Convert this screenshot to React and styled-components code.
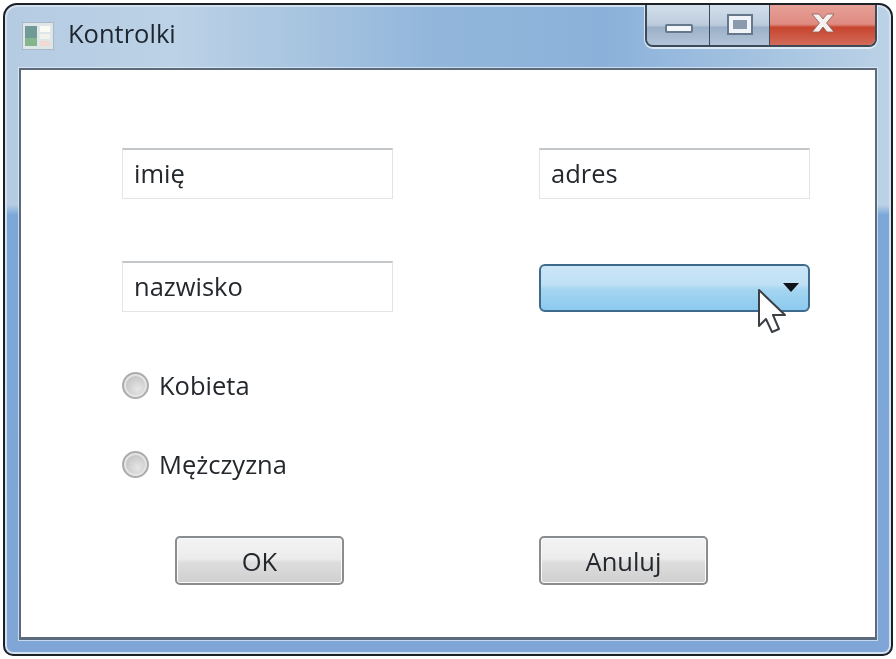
import styled, { createGlobalStyle } from "styled-components";

const GlobalStyle = createGlobalStyle`
  html, body {
    margin: 0;
    padding: 0;
    background: #fff;
  }
  body {
    font-family: "Open Sans", "Noto Sans", "Liberation Sans", sans-serif;
  }
`;

const App = () => {
  return (
    <Page>
      <GlobalStyle />
      <Window>
        <TitleBar>
          <AppIcon viewBox="0 0 32 28">
            <rect x="0.5" y="0.5" width="31" height="27" fill="#dfe6ea" stroke="#a9b8c4" />
            <rect x="3" y="4" width="12" height="20" fill="#6f9a96" />
            <rect x="3" y="16" width="12" height="8" fill="#84b58c" />
            <rect x="18" y="4" width="10" height="6" fill="#fbfbf6" />
            <rect x="18" y="12" width="10" height="5" fill="#f3f3ee" />
            <rect x="18" y="19" width="10" height="5" fill="#f2d9d2" />
          </AppIcon>
          <Title>Kontrolki</Title>
          <CaptionButtons>
            <MinimizeButton>
              <MinimizeGlyph />
            </MinimizeButton>
            <MaximizeButton>
              <MaximizeGlyph />
            </MaximizeButton>
            <CloseButton>
              <CloseGlyph viewBox="0 0 24 20">
                <path
                  d="M1 1 H8 L12 6 L16 1 H23 L15.5 10 L23 19 H16 L12 14 L8 19 H1 L8.5 10 Z"
                  fill="#f4f1f0"
                  stroke="#8a5a58"
                  strokeWidth="0.8"
                />
              </CloseGlyph>
            </CloseButton>
          </CaptionButtons>
        </TitleBar>
        <Client>
          <Form>
            <FieldRow>
              <TextField>imię</TextField>
              <TextField>adres</TextField>
            </FieldRow>
            <SecondFieldRow>
              <TextField>nazwisko</TextField>
              <ComboBox>
                <ComboArrow />
                <Cursor viewBox="0 0 30 46">
                  <path
                    d="M2 2 L2 38 L9 31 L15 44 L22 41 L16 27 L28 27 Z"
                    fill="#fff"
                    stroke="#3c3f46"
                    strokeWidth="2"
                    strokeLinejoin="round"
                  />
                </Cursor>
              </ComboBox>
            </SecondFieldRow>
            <RadioGroup>
              <RadioRow>
                <RadioDot />
                <RadioLabel>Kobieta</RadioLabel>
              </RadioRow>
              <RadioRow>
                <RadioDot />
                <RadioLabel>Mężczyzna</RadioLabel>
              </RadioRow>
            </RadioGroup>
            <ButtonRow>
              <OkButton>OK</OkButton>
              <PushButton>Anuluj</PushButton>
            </ButtonRow>
          </Form>
        </Client>
      </Window>
    </Page>
  );
};

const Page = styled.div`
  width: 896px;
  height: 659px;
  padding: 3px;
  box-sizing: border-box;
  overflow: hidden;
  background: #fff;
`;

const Window = styled.div`
  width: 890px;
  height: 653px;
  box-sizing: border-box;
  display: flex;
  flex-direction: column;
  border: 2px solid #1c2126;
  border-radius: 14px 14px 10px 10px;
  padding: 0 14px 14px;
  box-shadow: inset 0 0 0 2px #d3e0ee;
  filter: blur(0.7px);
  background:
    linear-gradient(180deg, rgba(255, 255, 255, 0) 0, rgba(255, 255, 255, 0) 200px, rgba(120, 165, 215, 0.95) 210px, #7fa6d6 100%),
    linear-gradient(90deg, #b4cbe2 0, #bcd2e6 170px, #93b7db 420px, #8bb1da 600px, #a9c6e2 780px, #bcd2e6 100%);
`;

const TitleBar = styled.div`
  height: 63px;
  flex: none;
  display: flex;
  align-items: flex-start;
`;

const AppIcon = styled.svg`
  width: 32px;
  height: 28px;
  margin: 17px 0 0 3px;
  flex: none;
`;

const Title = styled.div`
  margin: 11px 0 0 14px;
  font-size: 25.5px;
  line-height: 34px;
  color: #1d2630;
`;

const CaptionButtons = styled.div`
  display: flex;
  height: 42px;
  margin-left: auto;
  border: 2px solid #3d4a5a;
  border-top: none;
  border-radius: 0 0 8px 8px;
  box-shadow: 0 1px 0 1px rgba(235, 243, 250, 0.8);
  overflow: hidden;
  box-sizing: border-box;
`;

const CaptionButton = styled.div`
  display: flex;
  align-items: center;
  justify-content: center;
  box-sizing: border-box;
  background: linear-gradient(180deg, #d3dfeb 0, #bccbdc 50%, #9bb0c8 56%, #b2c4d8 100%);
`;

const MinimizeButton = styled(CaptionButton)`
  width: 63px;
  border-right: 1px solid #3d4a5a;
  padding: 7px 0 0 2px;
`;

const MaximizeButton = styled(CaptionButton)`
  width: 60px;
  border-right: 1px solid #3d4a5a;
  padding-bottom: 2px;
`;

const CloseButton = styled(CaptionButton)`
  width: 105px;
  padding-bottom: 4px;
  background: linear-gradient(180deg, #e6a097 0, #df8a80 48%, #c7452f 56%, #d26a58 100%);
`;

const MinimizeGlyph = styled.div`
  width: 28px;
  height: 9px;
  box-sizing: border-box;
  background: #f4f7fa;
  border: 2px solid #66788c;
  border-radius: 2px;
`;

const MaximizeGlyph = styled.div`
  width: 14px;
  height: 9px;
  background: #8b9bae;
  border: 5px solid #f0f4f8;
  outline: 2px solid #66788c;
  outline-offset: -1px;
`;

const CloseGlyph = styled.svg`
  width: 24px;
  height: 20px;
`;

const Client = styled.div`
  flex: 1;
  background: #fff;
  border: 2px solid #5b6b7c;
  border-bottom-width: 3px;
  box-shadow: 0 0 0 1px rgba(230, 238, 246, 0.7);
`;

const Form = styled.div`
  display: flex;
  flex-direction: column;
  padding: 78px 0 0 101px;
`;

const FieldRow = styled.div`
  display: grid;
  grid-template-columns: 271px 271px;
  column-gap: 146px;
`;

const SecondFieldRow = styled(FieldRow)`
  margin-top: 62px;
`;

const TextField = styled.div`
  box-sizing: border-box;
  height: 51px;
  padding: 0 0 3px 11px;
  display: flex;
  align-items: center;
  font-size: 25.5px;
  color: #24282d;
  background: #fff;
  border: 1px solid #e2e4e6;
  border-top: 2px solid #c4c7ca;
`;

const ComboBox = styled.div`
  position: relative;
  box-sizing: border-box;
  height: 48px;
  align-self: end;
  border: 2px solid #3f6a8c;
  border-radius: 6px;
  background: linear-gradient(180deg, #cbe6f7 0, #bfe0f5 42%, #a4d5f0 54%, #8ccaef 100%);
`;

const ComboArrow = styled.div`
  position: absolute;
  top: 17px;
  right: 9px;
  width: 0;
  height: 0;
  border-left: 8px solid transparent;
  border-right: 8px solid transparent;
  border-top: 9px solid #101418;
`;

const Cursor = styled.svg`
  position: absolute;
  left: 216px;
  top: 22px;
  width: 30px;
  height: 46px;
`;

const RadioGroup = styled.div`
  display: flex;
  flex-direction: column;
  gap: 51px;
  margin-top: 59px;
`;

const RadioRow = styled.div`
  display: flex;
  align-items: center;
  gap: 10px;
  height: 28px;
`;

const RadioDot = styled.div`
  width: 27px;
  height: 27px;
  box-sizing: border-box;
  border-radius: 50%;
  border: 2px solid #adadad;
  box-shadow: inset 0 0 0 2px #e4e4e4;
  background: radial-gradient(circle at 60% 65%, #e6e6e6 0, #c8c8c8 60%, #b8b8b8 100%);
`;

const RadioLabel = styled.div`
  font-size: 25.5px;
  color: #24282d;
`;

const ButtonRow = styled(FieldRow)`
  margin-top: 58px;
`;

const PushButton = styled.div`
  box-sizing: border-box;
  width: 169px;
  height: 49px;
  display: flex;
  align-items: center;
  justify-content: center;
  font-size: 25.5px;
  color: #24282d;
  border: 2px solid #8a8d90;
  border-radius: 5px;
  box-shadow: inset 0 0 0 1px #fafafa;
  background: linear-gradient(180deg, #f3f3f3 0, #ececec 46%, #dddddd 54%, #cfcfcf 100%);
`;

const OkButton = styled(PushButton)`
  margin-left: 53px;
`;

export default App;
